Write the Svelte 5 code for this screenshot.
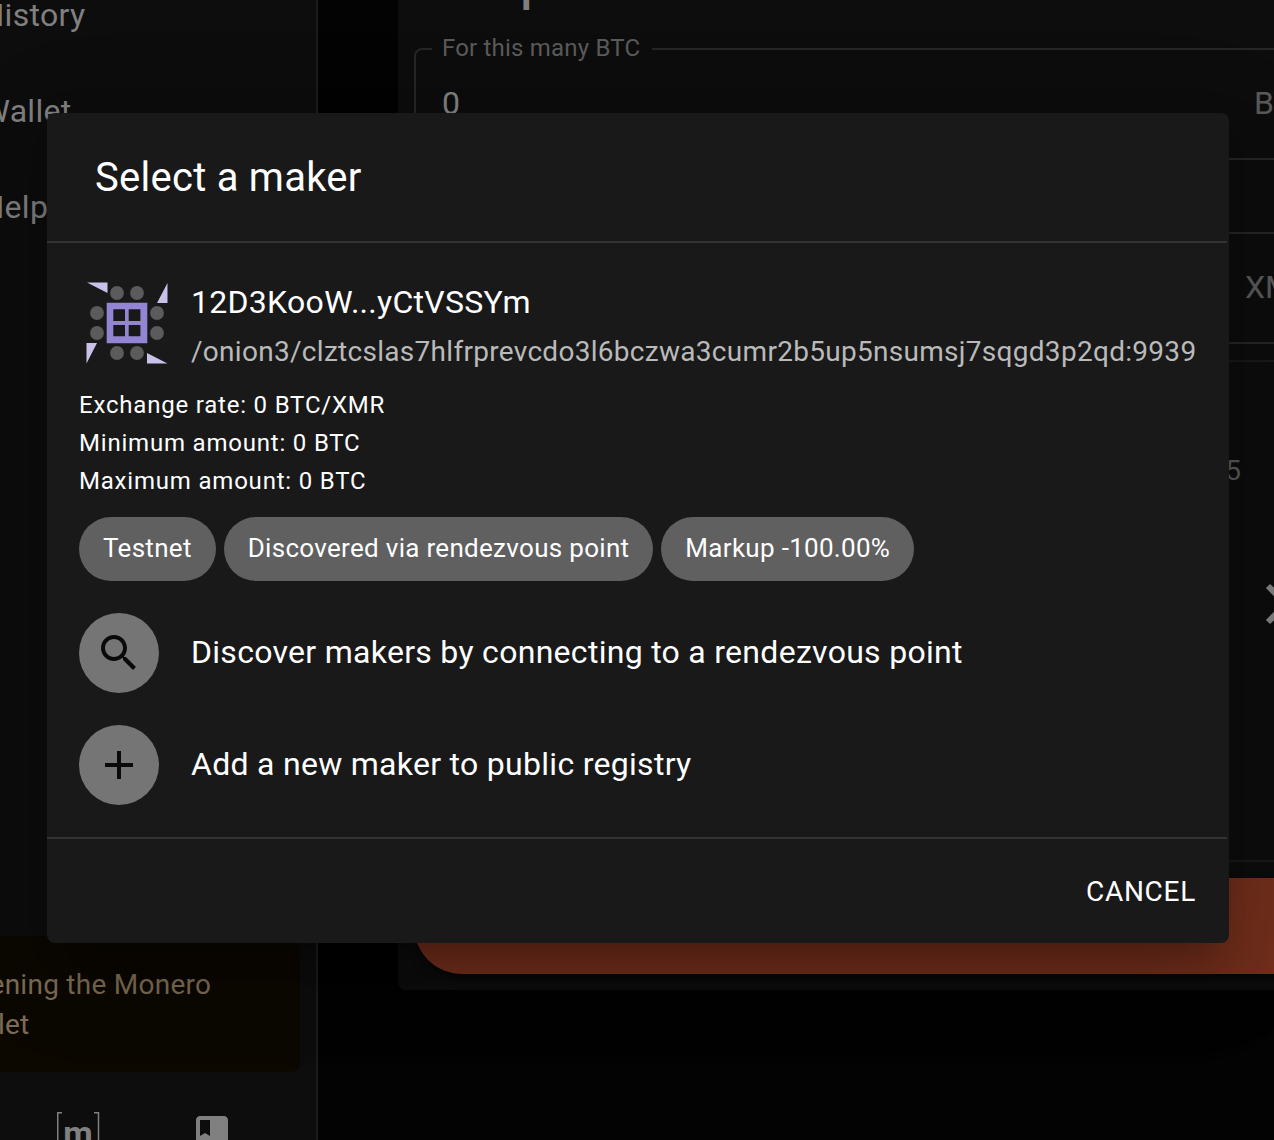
<script>
  const nav = ['History', 'Wallet', 'Help'];
  const details = [
    'Exchange rate: 0 BTC/XMR',
    'Minimum amount: 0 BTC',
    'Maximum amount: 0 BTC'
  ];
  const chips = ['Testnet', 'Discovered via rendezvous point', 'Markup -100.00%'];
  const actions = [
    {
      label: 'Discover makers by connecting to a rendezvous point',
      icon: 'M15.5 14h-.79l-.28-.27C15.41 12.59 16 11.11 16 9.5 16 5.91 13.09 3 9.5 3S3 5.91 3 9.5 5.91 16 9.5 16c1.61 0 3.09-.59 4.23-1.57l.27.28v.79l5 4.99L20.49 19l-4.99-5zm-6 0C7.01 14 5 11.99 5 9.5S7.01 5 9.5 5 14 7.01 14 9.5 11.99 14 9.5 14z'
    },
    {
      label: 'Add a new maker to public registry',
      icon: 'M19 13h-6v6h-2v-6H5v-2h6V5h2v6h6v2z'
    }
  ];
  const dots = [
    [38, 18], [58, 18], [18, 38], [18, 58],
    [78, 38], [78, 58], [38, 78], [58, 78]
  ];
</script>

<div class="app">
  <aside class="sidebar">
    <nav>
      {#each nav as item}
        <div class="nav-item">{item}</div>
      {/each}
    </nav>
    <div class="bottom">
      <div class="alert">Opening the Monero wallet</div>
      <div class="links">
        <svg class="matrix" viewBox="0 0 48 48">
          <path d="M8 .750H3.750v46.500H8M40 .750h4.500v46.500H40" />
          <text x="24" y="33" text-anchor="middle">m</text>
        </svg>
        <svg class="book" viewBox="0 0 24 24">
          <path d="M18 2H6c-1.100 0-2 .9-2 2v16c0 1.100.9 2 2 2h12c1.100 0 2-.9 2-2V4c0-1.100-.9-2-2-2zM6 4h5v8l-2.500-1.500L6 12V4z" />
        </svg>
      </div>
    </div>
  </aside>

  <main>
    <section class="card">
      <h1>Swap</h1>
      <fieldset class="field">
        <legend>For this many BTC</legend>
        <span class="value">0</span>
        <span class="unit">BTC</span>
      </fieldset>
      <div class="field second">
        <span class="unit">XMR</span>
      </div>
      <div class="maker">
        <span class="addr">12D3KooW5</span>
        <svg class="chevron" viewBox="0 0 24 24"><path d="M1.500 3l9 9-9 9" /></svg>
      </div>
      <div class="swap"></div>
    </section>
  </main>

  <div class="dialog" role="dialog" aria-label="Select a maker">
    <h2>Select a maker</h2>
    <div class="content">
      <div class="offer">
        <svg class="identicon" viewBox="0 0 96 96">
          <g class="tri">
            <path d="M8 7.500h20.500v10.500zM88.500 8v20h-10.500zM7.500 68h10.500l-10.500 20.500zM68 78v10.500h20.500z" />
          </g>
          {#each dots as [x, y]}
            <circle cx={x} cy={y} r="6.900" />
          {/each}
          <path class="core" fill-rule="evenodd" d="M27.700 27.700h40.600v40.600H27.700zM34.300 34.300v11.700h11.700V34.300zM49.700 34.300v11.700h11.700V34.300zM34.300 49.900v11.300h11.700V49.900zM49.700 49.900v11.300h11.700V49.900z" />
        </svg>
        <div class="who">
          <div class="primary">12D3KooW...yCtVSSYm</div>
          <div class="secondary">/onion3/clztcslas7hlfrprevcdo3l6bczwa3cumr2b5up5nsumsj7sqgd3p2qd:9939</div>
        </div>
      </div>
      <div class="details">
        {#each details as line}
          <div>{line}</div>
        {/each}
      </div>
      <div class="chips">
        {#each chips as chip}
          <span class="chip">{chip}</span>
        {/each}
      </div>
      {#each actions as action}
        <div class="action">
          <div class="avatar"><svg viewBox="0 0 24 24"><path d={action.icon} /></svg></div>
          <div class="primary">{action.label}</div>
        </div>
      {/each}
    </div>
    <footer><button>CANCEL</button></footer>
  </div>
</div>

<style>
  :global(body) { background: #030303; overflow: hidden; }
  .app {
    position: relative;
    display: flex;
    height: 1140px;
    overflow: hidden;
    background: #030303;
    color: #808080;
    font-family: Roboto, sans-serif;
  }
  .app * { box-sizing: border-box; }
  .sidebar {
    flex: none;
    display: flex;
    flex-direction: column;
    justify-content: space-between;
    width: 480px;
    height: 1188px;
    margin-left: -162px;
    background: #0d0d0d;
    border-right: 2px solid #1c1c1c;
  }
  nav { margin-top: -33px; }
  .nav-item {
    height: 96px;
    padding-left: 143.5px;
    font-size: 32px;
    line-height: 96px;
    letter-spacing: 0.009em;
  }
  .alert {
    height: 136px;
    margin: 0 16px;
    padding: 29px 32px 27px 100px;
    border-radius: 8px;
    background: #0c0800;
    color: #7f6e55;
    font-size: 28px;
    line-height: 40px;
    letter-spacing: 0.0095em;
  }
  .links { display: flex; gap: 86px; padding: 40px 0 28px 216px; }
  .links svg { width: 48px; height: 48px; fill: #808080; }
  .matrix path { fill: none; stroke: #808080; stroke-width: 1.500; }
  .matrix text { font-size: 34px; font-weight: 700; }
  main { flex: 1; padding-left: 80px; }
  .card {
    width: 1000px;
    height: 990px;
    padding: 0 16px;
    border-radius: 0 0 8px 8px;
    background: #0d0d0d;
  }
  h1 {
    height: 35px;
    margin: 0;
    padding-left: 16px;
    font-size: 48px;
    font-weight: 500;
    line-height: 0;
    transform: translateY(-16px);
  }
  .field {
    display: flex;
    align-items: center;
    height: 125px;
    min-width: 0;
    margin: 0;
    padding: 0 26px;
    border: 2px solid #262626;
    border-radius: 8px;
    font-size: 32px;
  }
  legend {
    height: 28px;
    padding: 0 12px 0 10px;
    margin-left: -10px;
    color: #5a5a5a;
    font-size: 24px;
    line-height: 26px;
    letter-spacing: 0.008em;
  }
  .value { width: 812px; margin-top: -15px; }
  .unit { color: #5a5a5a; margin-top: -16px; }
  .second { height: 112px; margin-top: 72px; }
  .second .unit { margin: -2px 0 0 803px; }
  .maker {
    display: flex;
    flex-direction: column;
    height: 502px;
    margin-top: 16px;
    border: 2px solid #191919;
    border-radius: 8px;
  }
  .addr { width: 825px; padding-top: 93px; font-size: 28px; line-height: 32px; text-align: right; color: #5a5a5a; }
  .chevron { width: 48px; height: 48px; margin: 93px 0 0 849px; fill: none; stroke: #808080; stroke-width: 3; }
  .swap { height: 96px; margin-top: 16px; border-radius: 48px; background: #732f1c; box-shadow: 0 4px 10px #0008; }
  .dialog {
    position: absolute;
    left: 47px;
    top: 113px;
    display: flex;
    flex-direction: column;
    width: 1182px;
    height: 830px;
    padding-right: 2px;
    border-radius: 8px;
    background: #191919;
    color: #fff;
    box-shadow: 0 22px 30px -14px #0003, 0 48px 76px 6px #00000024, 0 18px 92px 16px #0000001f;
  }
  h2 {
    height: 128px;
    margin: 0;
    padding: 33px 48px 31px;
    font-size: 40px;
    font-weight: 400;
    line-height: 64px;
    letter-spacing: 0.0065em;
  }
  .content {
    height: 598px;
    padding: 32px 0 0 32px;
    border-top: 2px solid #333;
    border-bottom: 2px solid #333;
  }
  .offer { display: flex; height: 111px; }
  .identicon { flex: none; width: 96px; height: 96px; margin-right: 16px; fill: #5b5b5b; }
  .tri { fill: #c9c1e9; }
  .core { fill: #9385d3; }
  .primary { font-size: 32px; line-height: 48px; letter-spacing: 0.009em; white-space: nowrap; }
  .who { padding-top: 3px; }
  .secondary {
    margin-top: 6px;
    color: #bababa;
    font-size: 28px;
    line-height: 40px;
    letter-spacing: 0.0104em;
    white-space: nowrap;
  }
  .details { font-size: 24px; line-height: 38px; letter-spacing: 0.03333em; }
  .chips { display: flex; gap: 8px; margin-top: 17px; }
  .chip {
    height: 64px;
    padding: 0 24px;
    border-radius: 32px;
    background: #606060;
    font-size: 26px;
    line-height: 63px;
    white-space: nowrap;
    letter-spacing: 0.0115em;
  }
  .action { display: flex; align-items: center; height: 80px; margin-top: 32px; }
  .action .primary { padding-bottom: 2px; }
  .avatar {
    display: grid;
    place-items: center;
    width: 80px;
    height: 80px;
    margin-right: 32px;
    border-radius: 50%;
    background: #757575;
  }
  .avatar svg { width: 48px; height: 48px; fill: #0a0a0a; }
  footer { display: flex; justify-content: flex-end; padding: 16px; }
  button {
    height: 72px;
    padding: 1px 15px 0;
    border: 0;
    background: none;
    color: #fff;
    font: 400 28px Roboto, sans-serif;
    letter-spacing: 0.026em;
  }
</style>
